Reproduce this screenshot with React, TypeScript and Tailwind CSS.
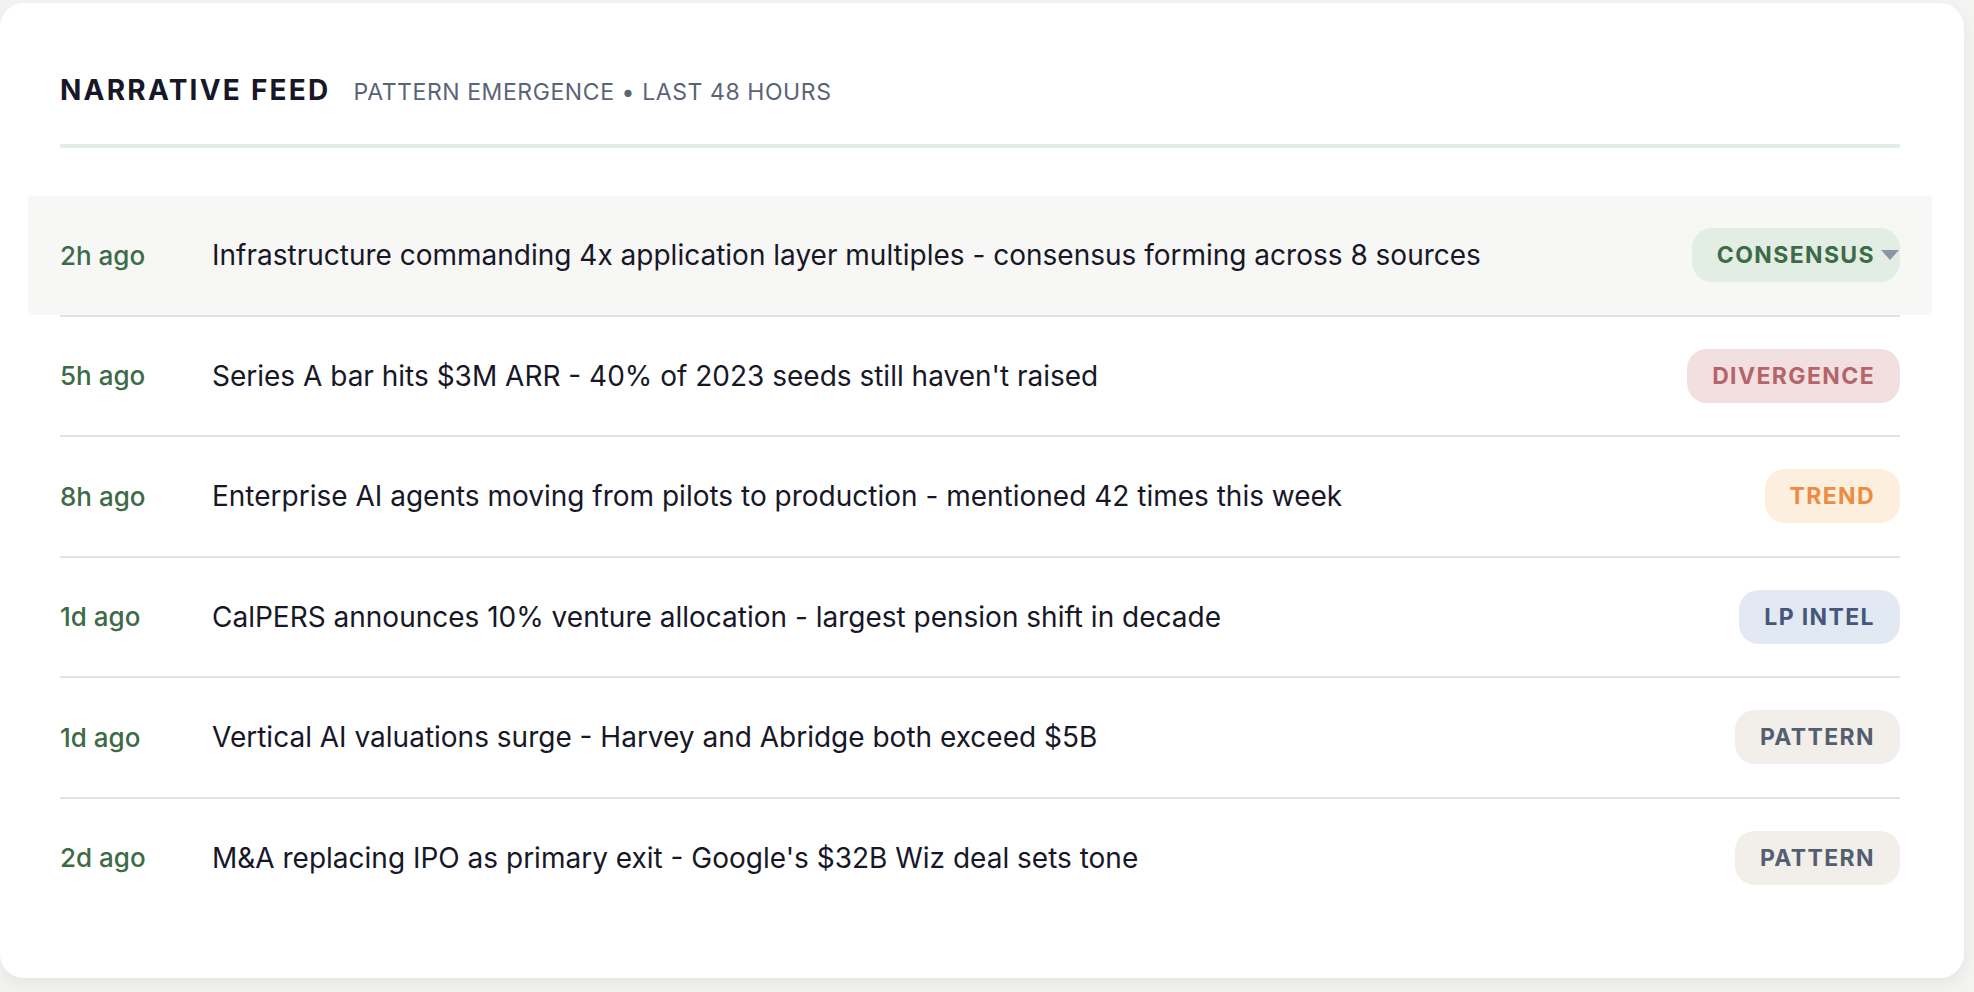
import React from 'react';

type Tag = 'CONSENSUS' | 'DIVERGENCE' | 'TREND' | 'LP INTEL' | 'PATTERN';

const tagStyles: Record<Tag, string> = {
  CONSENSUS: 'bg-[#e2ede3] text-[#3d6b47]',
  DIVERGENCE: 'bg-[#f2dfe0] text-[#b5646a]',
  TREND: 'bg-[#fdefdd] text-[#ee8b43]',
  'LP INTEL': 'bg-[#e2e9f2] text-[#45577a]',
  PATTERN: 'bg-[#f2efea] text-[#555e70]',
};

const items: { time: string; text: string; tag: Tag; active?: boolean }[] = [
  {
    time: '2h ago',
    text: 'Infrastructure commanding 4x application layer multiples - consensus forming across 8 sources',
    tag: 'CONSENSUS',
    active: true,
  },
  { time: '5h ago', text: "Series A bar hits $3M ARR - 40% of 2023 seeds still haven't raised", tag: 'DIVERGENCE' },
  { time: '8h ago', text: 'Enterprise AI agents moving from pilots to production - mentioned 42 times this week', tag: 'TREND' },
  { time: '1d ago', text: 'CalPERS announces 10% venture allocation - largest pension shift in decade', tag: 'LP INTEL' },
  { time: '1d ago', text: 'Vertical AI valuations surge - Harvey and Abridge both exceed $5B', tag: 'PATTERN' },
  { time: '2d ago', text: "M&A replacing IPO as primary exit - Google's $32B Wiz deal sets tone", tag: 'PATTERN' },
];

function Badge({ tag, menu }: { tag: Tag; menu?: boolean }) {
  return (
    <span
      className={`relative inline-flex h-[54px] items-center rounded-[20px] px-[25px] text-[23px] font-bold tracking-[0.06em] ${tagStyles[tag]}`}
    >
      {tag}
      {menu && (
        <svg
          className="absolute right-[1px] top-1/2 -translate-y-1/2"
          width="18"
          height="10"
          viewBox="0 0 18 10"
        >
          <path d="M0 0h18L9 10z" fill="#8e93a6" />
        </svg>
      )}
    </span>
  );
}

export default function App() {
  return (
    <div className="min-h-screen bg-[#f3f3f2] pt-[3px] pr-[10px] font-['Inter',sans-serif]">
      <div className="rounded-3xl bg-white pl-[60px] pr-[64px] pt-[70px] pb-[61px] shadow-[0_6px_16px_rgba(0,0,0,0.06)]">
        <div className="flex items-baseline gap-[23px] leading-[34px]">
          <h2 className="text-[28px] font-bold tracking-[0.08em] text-[#171728]">NARRATIVE FEED</h2>
          <span className="text-[23px] tracking-[0.025em] text-[#5b6477]">PATTERN EMERGENCE • LAST 48 HOURS</span>
        </div>
        <div className="mt-[35px] h-[4px] bg-[#e2ede3]" />

        <div className="mt-[48px]">
          {items.map((item, i) => (
            <div key={i}>
              {i > 0 && <div className="h-[2px] bg-[#dfe3e8]" />}
              <div className={`-mx-8 px-8 ${item.active ? 'bg-[#f7f7f5]' : ''}`}>
                <div className="flex h-[118.5px] items-center">
                  <span className="w-[152px] shrink-0 text-[26px] font-medium text-[#3d6b47]">{item.time}</span>
                  <span className="flex-1 text-[28px] text-[#171728]">{item.text}</span>
                  <Badge tag={item.tag} menu={item.active} />
                </div>
              </div>
            </div>
          ))}
        </div>
      </div>
    </div>
  );
}
